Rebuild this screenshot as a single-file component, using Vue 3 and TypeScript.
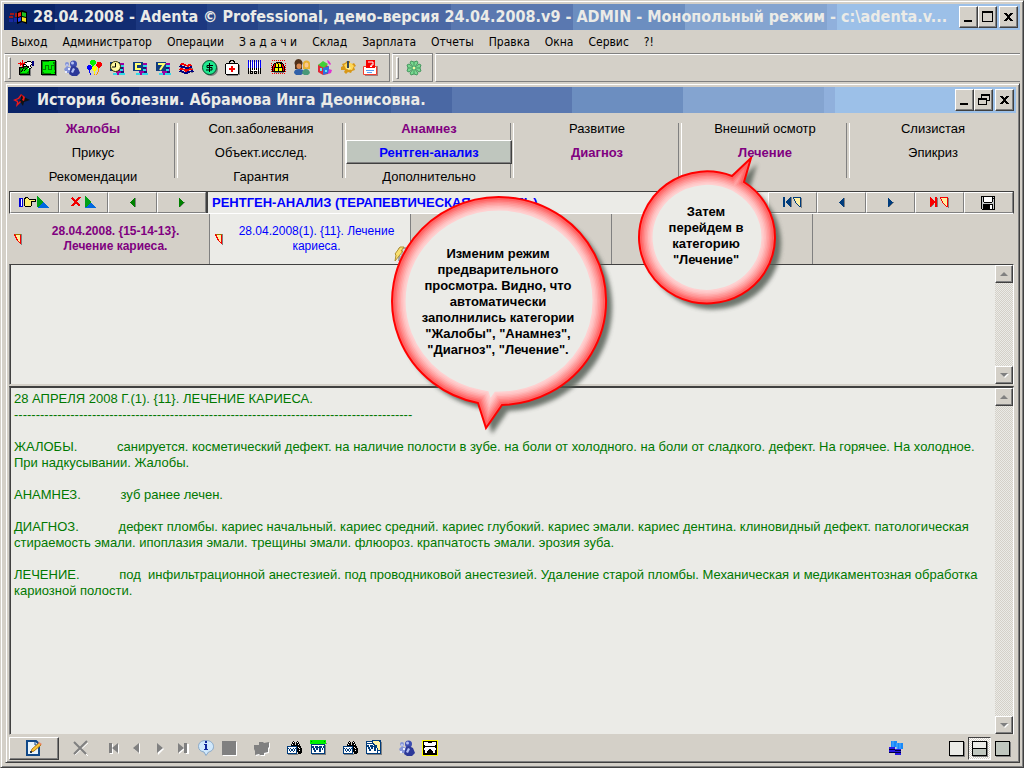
<script setup lang="ts">
import { ref } from 'vue'

interface Shape { d: string; fill: string; stroke?: string; w?: number }

const palette: Record<string, string> = {
  K: '#000000', W: '#ffffff', R: '#f80000', G: '#008000', g: '#00f000', B: '#0000ff', b: '#000080',
  Y: '#ffff00', y: '#fff0a0', C: '#30c8f8', P: '#800080', M: '#d000d0', N: '#003c7c', s: '#808080',
  S: '#c4c8c8', O: '#ff9000', T: '#0060e0', D: '#a07000', m: '#00c040',
}

function pixels(rows: string): Shape[] {
  const byColour: Record<string, string> = {}
  rows.trim().split('\n').forEach((line, y) => {
    const row = line.trim()
    let x = 0
    while (x < row.length) {
      const c = row[x]
      let end = x
      while (row[end] === c) end++
      if (palette[c]) byColour[c] = (byColour[c] ?? '') + `M${x} ${y}h${end - x}v1h${x - end}z`
      x = end
    }
  })
  return Object.entries(byColour).map(([c, d]) => ({ d, fill: palette[c] }))
}

const people: Shape[] = [
  { d: 'M1 4a2 2 0 1 1 4 0a2 2 0 1 1-4 0M0 9l3-3 4 2v5H2z', fill: '#8494d8' },
  { d: 'M6 4a3.500 3.500 0 1 1 7 0a3.500 3.500 0 1 1-7 0', fill: '#3c4cb0' },
  { d: 'M5 14l2-7 3-1 4 2 2 5-3 3H8z', fill: '#2c3898' },
  { d: 'M7 3a1.500 1.500 0 1 1 3 0a1.500 1.500 0 1 1-3 0M7 12l2-4 2 1-2 4zM2 4h2v2H2z', fill: '#b4c0f4' },
  { d: 'M4 8h2v2H4zM1 11h2v2H1z', fill: '#e8ecff' },
]

const stripes = (glyph: string): Shape[] => [
  { d: 'M6 3h8v12H6z', fill: '#a000a0' },
  { d: 'M10 5h4v2h-4zM10 9h3v2h-3zM3 13h4v2H3zM9 13h6v2H9z', fill: '#30d8e8' },
  { d: 'M10 7h3v2h-3zM11 11h3v2h-3z', fill: '#181878' },
  { d: 'M0 2h10v9H0z', fill: '#103c80' },
  { d: glyph, fill: 'none', stroke: '#ffff70', w: 2 },
]

const binocularWord = `
................
......K...K.....
.....KWK.KWK....
.....KKK.KKK....
....KWKK.KKWK...
....KKKKKKKKK...
NNNNNNNNNNKKKK..
NWWWWWWWWNKWKK..
NNWNWWNWNNKKWKK.
NWNWNNWNWNKKKKK.
NWNWNNWNWNKKWKK.
NWWNWWNWWNKKKKK.
NWWWWWWWWN.KKKK.
NNNNNNNNNN.KKK..
.ssssssssss.....
................`

const icons: Record<string, Shape[]> = {
  exit: pixels(`
....R...........
....R....KKKK.bb
..R.R.RKKWWWWKbb
RRRRRRRWWWWWWWbb
..RRRKKKWWWWWKbb
..R.RKWWKWWWK.bb
....RKKKKKKWK...
.KKKKKGGgKKWWK..
.KGGgKGGKgWKK...
.KGgKggKgggKs...
.KGGKgKggggKs...
.KGKggggggGKs...
.KGggggggGGKs...
.KGGGGGGGGGKs...
.KKKKKKKKKKKs...
..sssssssssss...`),
  monitor: pixels(`
KKKKKKKKKKKKKKK.
KGGGGGGGggggggKs
KGggggggggggGGKs
KGggggggggggGGKs
KGgggggggggggGKs
KGggGGGGggGGGGKs
KGggGggGggGggGKs
KGggGggGggGggGKs
KGggGggGggGggGKs
KGGGGggGGGGggGKs
KGggggggggggggKs
KGggggggggggggKs
KGGggggggggggGKs
KGGGGGGGGGggggKs
KKKKKKKKKKKKKKKs
.sssssssssssssss`),
  people,
  balloons: pixels(`
....gggg........
...gggggg.......
...gggggg.RRRR..
...gggggg.RRRRR.
....gggg.RRRRRR.
.BBB.gg..RRRRRR.
BBBBBgYYY.RRRR..
BBBBBYYYYY.RR...
BBBBBYYYYY.O....
.BBB.YYYYY.O....
..B...YYY..O....
..B....Y...O....
..B....Y..O.....
...B...Y..O.....
...B...O.O......
................`),
  clock: [
    ...stripes('M1 3'),
    { d: 'M.5 6.500a5 5 0 1 1 10 0a5 5 0 1 1-10 0', fill: '#fff8a0', stroke: '#303000', w: 1 },
    { d: 'M5.500 3v4H2', fill: 'none', stroke: '#000', w: 1 },
  ],
  copyC: stripes('M8 4H3v5h5'),
  week: stripes('M2 4h6L4 10'),
  flags: pixels(`
................
................
................
..RRR...........
.RRRRRR..RRR....
.bb..RRRRRRRR...
bbbbbb..RR.bb...
.sbbbbbbbbbbb...
.RRR..bbbbRRss..
RRRRRRRRRRRRRR..
.bb..RRRRR..bb..
bbbbb.RRbbbbbbb.
..sbbbbbbbb.ss..
.....bbbb.......
................
................`),
  dollar: [
    { d: 'M2 9a7 7 0 1 1 14 0a7 7 0 1 1-14 0', fill: '#808080' },
    { d: 'M.5 7.500a7 7 0 1 1 14 0a7 7 0 1 1-14 0', fill: '#20e890', stroke: '#004c28', w: 1 },
    { d: 'M11 5.500H5v2h5v2.500H4M7.500 3v9', fill: 'none', stroke: '#000', w: 1 },
  ],
  medkit: pixels(`
.....KKKK.......
....KK..KK......
....K....K......
.KKKKKKKKKKKK...
KWWWWWWWWWWWWK..
KWWWWWWWWWWWWKs.
KWWWWWRRWWWWWKs.
KWWWWWRRWWWWWKs.
KWWWRRRRRRWWWKs.
KWWWRRRRRRWWWKs.
KWWWWWRRWWWWWKs.
KWWWWWRRWWWWWKs.
KWWWWWWWWWWWWKs.
KWWWWWWWWWWWWKs.
.KKKKKKKKKKKKss.
..sssssssssss...`),
  barcode: pixels(`
B.b.B.b.B.b.B...
B.b.B.b.B.b.B...
BWbWBWbWBWbWB...
BWbWBWbWBWbWB...
BWbWBWbWBWbWB...
BWbWBWbWBWbWB...
BWbWBWbWBWbWB...
BWbWBWbWBWbWB...
KWKWKWKWKWKWK...
KWKWKWKWKWKWK...
KWKWWWWWWWKWK...
K.KKK.KKK.K.K...
K.K.K.K.K.K.K...
K.KKK.KKK.K.K...
................
................`),
  siren: pixels(`
.R.R.R.R.R.R.R..
................
.....KKKKKK.....
R..KKOKOOKKK..R.
..KRKYYKYYKRK...
R.KRKYYKYYKRK.R.
.KRRKYYKYYKRRK..
RKRKKKKKKKKKRKR.
.KRKYYYKYYYKRK..
RKRKYYYKYYYKRKR.
.KRKYYYKYYYKRK..
RKKKKKKKKKKKKKR.
...ssssssssss...
.R.R.R.R.R.R.R..
................
................`),
  couple: [
    { d: 'M1 5a4 4 0 1 1 7 0v4H1z', fill: '#503018' },
    { d: 'M2.500 6a2.500 2.500 0 1 1 5 0a2.500 3 0 1 1-5 0', fill: '#d88850' },
    { d: 'M0 13q0-4 5-4t5 4l-3 2H2z', fill: '#3060a8' },
    { d: 'M9 4a3.500 3.500 0 1 1 7 0v5H9z', fill: '#e8b030' },
    { d: 'M10.500 5a2 2.500 0 1 1 4 0a2 2.500 0 1 1-4 0', fill: '#f8c890' },
    { d: 'M8 13q1-4 4-4t4 4l-2 2h-4z', fill: '#489878' },
  ],
  cubes: [
    { d: 'M1 5l5-2 5 3v8l-5 1-5-3z', fill: '#e02838' },
    { d: 'M1 5l5-4 5 3-4 4z', fill: '#40d038' },
    { d: 'M6 8l6-2v7l-6 2z', fill: '#3070e0' },
    { d: 'M10 0l2 1 2 3-1 1-2-2zM12 9l3 1-1 3-3 1z', fill: '#e030d0' },
    { d: 'M3 8h2v3H3zM8 10h2v2H8z', fill: '#60e8f0' },
  ],
  gear: [
    { d: 'M7 1h3v2l2 1 2-1 2 3-2 1 1 3-3 1-1 2-3-1-2 2-2-2 1-2H1V7l2-1-1-2 3-1z', fill: '#d89818' },
    { d: 'M4 5l3-2h4l3 3-2 4-6-1z', fill: '#ffd858' },
    { d: 'M6 8l2-2 3 2-2 2z', fill: '#fff0a0' },
    { d: 'M7 1h2v7H7z', fill: '#384858' },
  ],
  helpDoc: [
    { d: 'M2 6h13v10H2z', fill: '#a08080' },
    { d: 'M.5 6.500h13v8H.5z', fill: '#fff', stroke: '#f04030', w: 1 },
    { d: 'M3 0h9v8H3z', fill: '#f80000' },
    { d: 'M5 2h5v3H8v1M7 2', fill: 'none', stroke: '#fff', w: 1 },
    { d: 'M7 6h2v1H7z', fill: '#fff' },
    { d: 'M3 10h8v1H3zM4 12h5v1H4z', fill: '#60a0f0' },
  ],
  clover: [
    { d: 'M8 8L4 3l1-2 3 1 3-1 1 2zM8 8l5-4 2 1-1 3 1 3-2 1zM8 8l4 5-1 2-3-1-3 1-1-2zM8 8l-5 4-2-1 1-3-1-3 2-1z', fill: '#78d890', stroke: '#489860', w: 1 },
    { d: 'M8 2v4M8 10v4M2 8h4M10 8h4', fill: 'none', stroke: '#489860', w: 1 },
    { d: 'M7 7h2v2H7z', fill: '#f8f8a0' },
  ],
  windows: [
    { d: 'M1 4h4v2H1zM0 7h4v2H0zM6 4h2v4H6z', fill: '#a01818' },
    { d: 'M0 10h4v3H0zM5 9h3v4H5z', fill: '#1828a0' },
    { d: 'M8 3l5-2 5 2v12l-5-2-5 2z', fill: '#000' },
    { d: 'M9 4l3-1v4L9 8z', fill: '#f02818' },
    { d: 'M13 3l4 1v4l-4-1z', fill: '#20c020' },
    { d: 'M9 9l3-1v4l-3 1z', fill: '#2040f0' },
    { d: 'M13 8l4 1v4l-4-1z', fill: '#f0e020' },
  ],
  star: [
    { d: 'M8 2l3 3 6 3-6 2-1 4-2-3-2-1 2-3z', fill: '#101010' },
    { d: 'M8 2L5 6 0 8l4 2-1 5 5-5-1-1-2 2v-2L3 8l3-1 3-4 1 3-1 2 2 1 1-4z', fill: '#f01818' },
  ],
  hand: [
    { d: 'M0 2h4v9H0z', fill: '#0000d8' },
    { d: 'M2 3h1v7H2z', fill: '#fff' },
    { d: 'M5 3l3-2 2 2h6v2h-4v1h1l-1 4H6l-1-2z', fill: '#fff070', stroke: '#000', w: 1 },
    { d: 'M19 1v11h11z', fill: '#0068e0' },
    { d: 'M18 11V0l6 6-5 5z', fill: '#00a018' },
  ],
  cross: [
    { d: 'M3 2l8 8M11 1l-8 9', fill: 'none', stroke: '#f00000', w: 2 },
    { d: 'M16 1v11h12z', fill: '#0068e0' },
    { d: 'M16 11V0l6 6-5 5z', fill: '#00a018' },
  ],
  prevGreen: pixels(`
....Gs
...GGs
..GGGs
.GGGGs
GGGGGs
.GGGGs
..GGGs
...GGs
....Gs`),
  nextGreen: pixels(`
G.....
GG....
GGG...
GGGG..
GGGGGs
GGGGs.
GGGs..
GGs...
Gs....`),
  prevBlue: pixels(`
....Ns
...NNs
..NNNs
.NNNNs
NNNNNs
.NNNNs
..NNNs
...NNs
....Ns`),
  nextBlue: pixels(`
N.....
NN....
NNN...
NNNN..
NNNNNs
NNNNs.
NNNs..
NNs...
Ns....`),
  firstPage: pixels(`
NN.....Ns.NNNNNNNN.
NN....NNs.NyyyyyyNs
NN...NNNs..NyyyyyNs
NN..NNNNs..NyyyyyNs
NN.NNNNNs...NyyyyNs
NN.NNNNNs...NyyyyNs
NN..NNNNs....NyyyNs
NN...NNNs.....NyyNs
NN....NNs......NyNs
NN.....Ns.......NNs
..................s`),
  lastPage: pixels(`
R....RR...RRRRRRRR.
RR...RRs..RyyyyyyRs
RRR..RRs...RyyyyyRs
RRRR.RRs...RyyyyyRs
RRRRRRRs....RyyyyRs
RRRRRRRs....RyyyyRs
RRRR.RRs.....RyyyRs
RRRs.RRs......RyyRs
RRs..RRs.......RyRs
Rs...RRs........RRs
..................s`),
  floppy: pixels(`
KKKKKKKKKKKKKK..
KSKWWWWWWWWKSK..
KSKWWWWWWWWKKK..
KSKWWWWWWWWKSK..
KSKWWWWWWWWKSK..
KSKWWWWWWWWKSK..
KSSKKKKKKKKSSK..
KSSSSSSSSSSSSK..
KSKKKKKKKKKKSK..
KSKKKKKKKWWKSK..
KSKKKKKKKWWKSK..
KSKKKKKKKWWKSK..
KSKKKKKKKWWKSK..
.KKKKKKKKKKKKK..`),
  mark: pixels(`
RDDDDDDs
RRyyyyRs
.RyyyyRs
.RRyyyRs
..RyyyRs
..RRyyRs
...RyyRs
....RyRs
.....RRs
......Rs
.......s`),
  sheet: [
    { d: 'M6 2h7l2 2v11H6z', fill: '#d8d8dc', stroke: '#686870', w: 1 },
    { d: 'M2 8L7 1h4L8 5h2L2 15l1-6z', fill: '#f8e070', stroke: '#b09030', w: 1 },
    { d: 'M9 7h5M8 9h6M7 11h7M7 13h7', fill: 'none', stroke: '#8888a8', w: 1 },
  ],
  note: [
    { d: 'M1 1h9l3 3v11H1z', fill: '#e8f4fc', stroke: '#104888', w: 2 },
    { d: 'M9 1v4h4', fill: 'none', stroke: '#104888', w: 1 },
    { d: 'M5 12l1-3 7-6 2 2-7 6z', fill: '#f8c838', stroke: '#b87818', w: 1 },
    { d: 'M13 2l3 2-1 1-3-2z', fill: '#f08868' },
    { d: 'M4 11h2v2H4z', fill: '#283848' },
  ],
  remove: [
    { d: 'M2 3l13 13M15 3L2 15', fill: 'none', stroke: '#fff', w: 1 },
    { d: 'M1 2l12 12M14 1L1 14', fill: 'none', stroke: '#808080', w: 2 },
  ],
  first: [
    { d: 'M4 4h3v10H4zM13 4v10L8 9z', fill: '#fff' },
    { d: 'M3 3h3v10H3zM12 3v10L6 8z', fill: '#808080' },
  ],
  prev: [{ d: 'M11 3v11L5 9z', fill: '#fff' }, { d: 'M10 3v10L4 8z', fill: '#808080' }],
  next: [{ d: 'M6 4v11l6-6z', fill: '#fff' }, { d: 'M5 3v10l6-5z', fill: '#808080' }],
  last: [
    { d: 'M4 4v10l6-5zM11 4h3v10h-3z', fill: '#fff' },
    { d: 'M3 3v10l6-5zM9 3h3v10H9z', fill: '#808080' },
  ],
  info: [
    { d: 'M8 .5c5 0 7.500 3 7.500 6 0 4-3 5-5 5.500L8 15.500 6 12C3 11.500.5 10 .5 6.500.5 3 3 .5 8 .5z', fill: '#d0e8fc', stroke: '#88a8c8', w: 1 },
    { d: 'M7 1h2v2H7zM6 4h3v5h1v1H6V9h1V5H6z', fill: '#10289c' },
  ],
  stop: [{ d: 'M2 2h14v14H2z', fill: '#fff' }, { d: 'M1 1h14v14H1z', fill: '#808080' }],
  puzzle: [
    { d: 'M6 3h4l1 1 5-1v5l-1 1v4l-4 1v2H7l-1-1-4 1v-4l-1-1V6h5z', fill: '#fff' },
    { d: 'M5 2h4l1 1 5-1v5l-1 1v4l-4 1v2H6l-1-1-4 1v-4L0 9V5h5z', fill: '#808080' },
  ],
  findWord: pixels(binocularWord),
  wordGreen: pixels(`
gggggggggggggggg
gGggggggggggggGg
gggggggggggggggg
ggggggggggggggggs
.NNNNNNNNNNNNNN.
.NWWWWWWWWWWWWNs
.NNNWNNNWNNNWNNs
.NNNWNNNNNNNWNNs
.NWNNWNNWNNWNWNs
.NWNNWNNWNNWNWNs
.NWWNNWWWNNWWWNs
.NWWNNWWWNNWWWNs
.NWWWWWWWWWWWWNs
.NNNNNNNNNNNNNNs
..ssssssssssssss
................`),
  wordYellow: pixels(`
......NNNNNNNNN.
NNNNNNNyyyyyyNN.
NWWWWWNyyyyyyyNs
NNNNNNNNyyyyyyNs
NWWWWWWNNyyyyyNs
NNNWNNNWNNNyyyNs
NNNWNNNNNNNyyyNs
NWNNWNNWNNNyyyNs
NWNNWNNWNNWNyyNs
NWWNNWWWNNWNyyNs
NWWNNWWWNNWNNNNs
NWWWWWWWWWWNWWNs
NWWWWWWWWWWNWWNs
NNNNNNNNNNNNNNNs
.sssssssssssssss
................`),
  tooth: pixels(`
YYYYYYYYYYYYYYYY
YKKKKKKKKKKKKKKY
YKWWWWKKKKWWWWKY
YKWWWWWWWWWWWWKY
YKWWWWWWWWWWWWKY
YKKWWWWWWWWWWKKY
YKKKKKKKKKKKKKKY
YKKWWWWWWWWWWKKY
YKWWWWWWWWWWWWKY
YKWWWWWKKWWWWWKY
YKKWWWKKKKWWWKKY
YKKWWKKKKKKWWKKY
YKKWWKKKKKKWWKKY
YKKKKKKKKKKKKKKY
YKKKKKKKKKKKKKKY
YYYYYYYYYYYYYYYY`),
  blocks: [
    { d: 'M3 1h6v2h6v6H9V7H3z', fill: '#1888f8' },
    { d: 'M5 1v6M9 3v6M12 3v6', fill: 'none', stroke: '#50b0ff', w: 1 },
    { d: 'M1 7h6v2h6v6H7v-2H1z', fill: '#2818e0' },
    { d: 'M1 9.500h6M1 12.500h12M7 10.500h6', fill: 'none', stroke: '#000040', w: 1 },
  ],
  minimize: [{ d: 'M2 10h8v2H2z', fill: '#000' }],
  maximize: [{ d: 'M1.500 2.500h10v9h-10z', fill: 'none', stroke: '#000', w: 1 }, { d: 'M1 1h11v2H1z', fill: '#000' }],
  restore: [
    { d: 'M4.500 2.500h8v5h-8z', fill: '#d4d0c8', stroke: '#000', w: 1 },
    { d: 'M1.500 6.500h8v5h-8z', fill: '#d4d0c8', stroke: '#000', w: 1 },
    { d: 'M4 1h9v2H4zM1 5h9v2H1z', fill: '#000' },
  ],
  close: [{ d: 'M3 3l7 8M10 3l-7 8', fill: 'none', stroke: '#000', w: 2 }],
  up: [{ d: 'M3 9l4-4 4 4z', fill: '#808080' }],
  down: [{ d: 'M4 6h8l-4 4z', fill: '#fff' }, { d: 'M3 5h8l-4 4z', fill: '#808080' }],
}

const title = '28.04.2008 - Adenta © Professional, демо-версия 24.04.2008.v9 - ADMIN - Монопольный режим - c:\\adenta.v...'
const menu = ['Выход', 'Администратор', 'Операции', 'З а д а ч и', 'Склад', 'Зарплата', 'Отчеты', 'Правка', 'Окна', 'Сервис', '?!']
const tools: [string, string][] = [
  ['exit', 'Выход'], ['monitor', 'Монитор'], ['people', 'Пациенты'], ['balloons', 'Дни рождения'], ['clock', 'Время'],
  ['copyC', 'Календарь'], ['week', 'Неделя'], ['flags', 'Флаги'], ['dollar', 'Касса'], ['medkit', 'Лечение'],
  ['barcode', 'Штрихкод'], ['siren', 'Вызов'], ['couple', 'Персонал'], ['cubes', 'Склад'], ['gear', 'Настройка'], ['helpDoc', 'Справка'],
]
const columns: { text: string; filled?: boolean }[][] = [
  [{ text: 'Жалобы', filled: true }, { text: 'Прикус' }, { text: 'Рекомендации' }],
  [{ text: 'Соп.заболевания' }, { text: 'Объект.исслед.' }, { text: 'Гарантия' }],
  [{ text: 'Анамнез', filled: true }, { text: 'Рентген-анализ' }, { text: 'Дополнительно' }],
  [{ text: 'Развитие' }, { text: 'Диагноз', filled: true }],
  [{ text: 'Внешний осмотр' }, { text: 'Лечение', filled: true }],
  [{ text: 'Слизистая' }, { text: 'Эпикриз' }],
]
const active = ref('Рентген-анализ')
const leftNav: [string, string, number, number][] = [
  ['hand', 'Выбрать', 31, 13], ['cross', 'Удалить', 29, 13], ['prevGreen', 'Назад', 6, 9], ['nextGreen', 'Вперед', 6, 9],
]
const rightNav: [string, string, number, number][] = [
  ['firstPage', 'Первая запись', 19, 11], ['prevBlue', 'Предыдущая запись', 6, 9], ['nextBlue', 'Следующая запись', 6, 9],
  ['lastPage', 'Последняя запись', 19, 11], ['floppy', 'Сохранить', 16, 14],
]
const heading = ref('РЕНТГЕН-АНАЛИЗ (ТЕРАПЕВТИЧЕСКАЯ  ПАНЕЛЬ)')
const note = ref('')
const gap = ' '.repeat(11)
const preview = ref([
  '28 АПРЕЛЯ 2008 Г.(1). {11}. ЛЕЧЕНИЕ КАРИЕСА.',
  '-'.repeat(92),
  '',
  `ЖАЛОБЫ.${gap}санируется. косметический дефект. на наличие полости в зубе. на боли от холодного. на боли от сладкого. дефект. На горячее. На холодное. При надкусывании. Жалобы.`,
  '',
  `АНАМНЕЗ.${gap}зуб ранее лечен.`,
  '',
  `ДИАГНОЗ.${gap}дефект пломбы. кариес начальный. кариес средний. кариес глубокий. кариес эмали. кариес дентина. клиновидный дефект. патологическая стираемость эмали. ипоплазия эмали. трещины эмали. флюороз. крапчатость эмали. эрозия зуба.`,
  '',
  `ЛЕЧЕНИЕ.${gap}под  инфильтрационной анестезией. под проводниковой анестезией. Удаление старой пломбы. Механическая и медикаментозная обработка кариозной полости.`,
].join('\n'))

const footGroups: [string, string][][] = [
  [['remove', 'Удалить']],
  [['first', 'В начало'], ['prev', 'Назад'], ['next', 'Вперед'], ['last', 'В конец'], ['info', 'Сведения'], ['stop', 'Стоп']],
  [['puzzle', 'Модуль']],
  [['findWord', 'Найти шаблон'], ['wordGreen', 'Шаблон']],
  [['findWord', 'Найти документ'], ['wordYellow', 'Документ']],
  [['people', 'Пациенты'], ['tooth', 'Зубная формула']],
]
const views = ['top', 'split', 'bottom']
const viewNames: Record<string, string> = { top: 'Только запись', split: 'Запись и просмотр', bottom: 'Только просмотр' }
const view = ref('split')

const callouts = [
  {
    id: 'preview', w: 240, h: 250, d: 'M98 213A107 104 0 1 1 122 215L106 238Z',
    lines: ['Изменим режим', 'предварительного', 'просмотра. Видно, что', 'автоматически', 'заполнились категории', '"Жалобы", "Анамнез",', '"Диагноз", "Лечение".'],
  },
  {
    id: 'category', w: 170, h: 170, d: 'M118 31A68 66 0 1 1 106 25L125 7Z',
    lines: ['Затем', 'перейдем в', 'категорию', '"Лечение"'],
  },
]
const rings: [number, string][] = [
  [27, '#ffd0d0'], [24, '#ffc8c8'], [21, '#ffbcbc'], [18, '#ffacac'], [15, '#ff9c9c'],
  [12, '#ff8c8c'], [9, '#ff7878'], [6, '#ff6464'],
]
</script>

<template>
  <div class="window">
    <header class="titlebar">
      <svg class="app-icon" viewBox="0 0 19 16" aria-hidden="true"><path v-for="(s, i) in icons.windows" :key="i" :d="s.d" :fill="s.fill" /></svg>
      <h1>{{ title }}</h1>
      <div class="winbuttons">
        <button v-for="b in ['minimize', 'maximize', 'close']" :key="b" :class="['win', b]" :aria-label="b">
          <svg viewBox="0 0 14 14"><path v-for="(s, i) in icons[b]" :key="i" :d="s.d" :fill="s.fill" :stroke="s.stroke" :stroke-width="s.w" /></svg>
        </button>
      </div>
    </header>

    <nav class="menu"><button v-for="m in menu" :key="m">{{ m }}</button></nav>

    <div class="toolbar">
      <div class="band">
        <i class="grip"></i>
        <button v-for="[n, label] in tools" :key="n" class="tool" :aria-label="label">
          <svg viewBox="0 0 16 16"><path v-for="(s, i) in icons[n]" :key="i" :d="s.d" :fill="s.fill" :stroke="s.stroke" :stroke-width="s.w" /></svg>
        </button>
      </div>
      <div class="band short">
        <i class="grip"></i>
        <button class="tool" aria-label="Клевер">
          <svg viewBox="0 0 16 16"><path v-for="(s, i) in icons.clover" :key="i" :d="s.d" :fill="s.fill" :stroke="s.stroke" :stroke-width="s.w" /></svg>
        </button>
      </div>
      <div class="band rest"></div>
    </div>

    <main class="child">
      <header class="titlebar">
        <svg class="app-icon" viewBox="0 0 19 16" aria-hidden="true"><path v-for="(s, i) in icons.star" :key="i" :d="s.d" :fill="s.fill" /></svg>
        <h2>История болезни. Абрамова Инга Деонисовна.</h2>
        <div class="winbuttons">
          <button v-for="b in ['minimize', 'restore', 'close']" :key="b" :class="['win', b]" :aria-label="b">
            <svg viewBox="0 0 14 14"><path v-for="(s, i) in icons[b]" :key="i" :d="s.d" :fill="s.fill" :stroke="s.stroke" :stroke-width="s.w" /></svg>
          </button>
        </div>
      </header>

      <nav class="categories">
        <div v-for="(col, c) in columns" :key="c" class="column">
          <button v-for="item in col" :key="item.text" :class="{ filled: item.filled, active: item.text === active }" @click="active = item.text">{{ item.text }}</button>
        </div>
      </nav>

      <div class="body">
        <div class="navrow">
          <div class="navgroup">
            <button v-for="[n, label, w, h] in leftNav" :key="n" :aria-label="label">
              <svg :width="w" :height="h" :viewBox="`0 0 ${w} ${h}`"><path v-for="(s, i) in icons[n]" :key="i" :d="s.d" :fill="s.fill" :stroke="s.stroke" :stroke-width="s.w" /></svg>
            </button>
          </div>
          <input v-model="heading" class="heading" aria-label="Категория">
          <div class="navgroup">
            <button v-for="[n, label, w, h] in rightNav" :key="n" :aria-label="label">
              <svg :width="w" :height="h" :viewBox="`0 0 ${w} ${h}`"><path v-for="(s, i) in icons[n]" :key="i" :d="s.d" :fill="s.fill" :stroke="s.stroke" :stroke-width="s.w" /></svg>
            </button>
          </div>
        </div>

        <div class="visits">
          <button class="visit past">
            <svg class="mark" viewBox="0 0 8 11"><path v-for="(s, i) in icons.mark" :key="i" :d="s.d" :fill="s.fill" /></svg>
            <span>28.04.2008. {15-14-13}.<br>Лечение кариеса.</span>
          </button>
          <button class="visit current">
            <svg class="mark" viewBox="0 0 8 11"><path v-for="(s, i) in icons.mark" :key="i" :d="s.d" :fill="s.fill" /></svg>
            <span>28.04.2008(1). {11}. Лечение<br>кариеса.</span>
            <svg class="sheet" viewBox="0 0 16 16"><path v-for="(s, i) in icons.sheet" :key="i" :d="s.d" :fill="s.fill" :stroke="s.stroke" :stroke-width="s.w" /></svg>
          </button>
          <div class="visit"></div>
          <div class="visit"></div>
          <div class="visit"></div>
        </div>

        <div class="memo upper">
          <textarea v-model="note" aria-label="Запись"></textarea>
          <div class="scroll">
            <button aria-label="Вверх"><svg viewBox="0 0 14 14"><path v-for="(s, i) in icons.up" :key="i" :d="s.d" :fill="s.fill" /></svg></button>
            <button aria-label="Вниз"><svg viewBox="0 0 14 14"><path v-for="(s, i) in icons.down" :key="i" :d="s.d" :fill="s.fill" /></svg></button>
          </div>
        </div>
        <div class="memo lower">
          <textarea v-model="preview" aria-label="Просмотр" readonly></textarea>
          <div class="scroll">
            <button aria-label="Вверх"><svg viewBox="0 0 14 14"><path v-for="(s, i) in icons.up" :key="i" :d="s.d" :fill="s.fill" /></svg></button>
            <button aria-label="Вниз"><svg viewBox="0 0 14 14"><path v-for="(s, i) in icons.down" :key="i" :d="s.d" :fill="s.fill" /></svg></button>
          </div>
        </div>

        <footer class="foot">
          <button class="edit" aria-label="Изменить">
            <svg viewBox="0 0 17 17"><path v-for="(s, i) in icons.note" :key="i" :d="s.d" :fill="s.fill" :stroke="s.stroke" :stroke-width="s.w" /></svg>
          </button>
          <div v-for="(g, k) in footGroups" :key="k" class="footgroup">
            <button v-for="[n, label] in g" :key="label" class="tool" :aria-label="label">
              <svg viewBox="0 0 16 16"><path v-for="(s, i) in icons[n]" :key="i" :d="s.d" :fill="s.fill" :stroke="s.stroke" :stroke-width="s.w" /></svg>
            </button>
          </div>
          <div class="footright">
            <button class="tool blocks" aria-label="Окна">
              <svg viewBox="0 0 16 16"><path v-for="(s, i) in icons.blocks" :key="i" :d="s.d" :fill="s.fill" :stroke="s.stroke" :stroke-width="s.w" /></svg>
            </button>
            <button v-for="v in views" :key="v" :class="['view', v, { on: v === view }]" :aria-label="viewNames[v]" @click="view = v"><i></i></button>
          </div>
        </footer>
      </div>
    </main>

    <aside v-for="c in callouts" :key="c.id" :class="['callout', c.id]">
      <svg :width="c.w" :height="c.h" :viewBox="`0 0 ${c.w} ${c.h}`" aria-hidden="true">
        <defs>
          <clipPath :id="`clip-${c.id}`"><path :d="c.d" /></clipPath>
          <filter :id="`blur-${c.id}`" x="-20%" y="-20%" width="140%" height="140%"><feGaussianBlur stdDeviation="2" /></filter>
        </defs>
        <path :d="c.d" fill="#505850" opacity="0.8" transform="translate(6 6)" :filter="`url(#blur-${c.id})`" />
        <path :d="c.d" fill="#ebebe7" />
        <g :clip-path="`url(#clip-${c.id})`">
          <path v-for="[w, colour] in rings" :key="w" :d="c.d" fill="none" :stroke="colour" :stroke-width="w" />
        </g>
        <path :d="c.d" fill="none" stroke="#ff0000" stroke-width="2" />
      </svg>
      <p><span v-for="l in c.lines" :key="l">{{ l }}</span></p>
    </aside>
  </div>
</template>

<style>
body { margin: 0; background: #d4d0c8; }
</style>

<style scoped>
* { box-sizing: border-box; }
button, input, textarea { font: inherit; color: inherit; border: 0; border-radius: 0; padding: 0; margin: 0; background: none; outline: 0; }
button { flex: none; }
svg { display: block; flex: none; }
h1, h2, p { margin: 0; }

.window {
  position: relative;
  display: flex;
  flex-direction: column;
  min-height: 100vh;
  padding: 2px 3px 4px 3px;
  background: #d4d0c8;
  border: 1px solid;
  border-color: #d4d0c8 #404040 #404040 #d4d0c8;
  box-shadow: inset 1px 1px #fff, inset -1px -1px #808080;
  font: 13px/16px "Liberation Sans", Arial, sans-serif;
  color: #000;
}
.titlebar {
  display: flex;
  align-items: center;
  height: 26px;
  margin-top: 1px;
  padding: 0 2px 0 5px;
  background: linear-gradient(90deg, #0a2468 0 5%, #122c72 5% 13%, #1c3880 13% 20%, #264488 20% 25%, #2f5090 25% 31%, #3c5c98 31% 38%, #4a68a4 38% 44%, #5a78b0 44% 56%, #6c8ec0 56% 67%, #84a4d0 67% 81%, #90b0dc 81% 82%, #9cc0e8 82%);
  color: #ebebe7;
}
.titlebar h1, .titlebar h2 {
  flex: 1;
  min-width: 0;
  padding-left: 5px;
  overflow: hidden;
  white-space: nowrap;
  font: bold 16px/24px "DejaVu Sans Condensed", "Noto Sans", sans-serif;
}
.app-icon { width: 19px; height: 16px; }
.winbuttons { display: flex; }
.win {
  display: grid;
  place-items: center;
  width: 19px;
  height: 22px;
  background: #d4d0c8;
  border: 1px solid;
  border-color: #fff #404040 #404040 #fff;
  box-shadow: inset -1px -1px #808080;
}
.win.close { margin-left: 2px; }
.win svg { width: 14px; height: 14px; shape-rendering: crispEdges; }

.menu {
  display: flex;
  align-items: center;
  gap: 15px;
  height: 23px;
  padding: 0 7px;
  font: 12px/16px "DejaVu Sans Condensed", "Noto Sans", sans-serif;
  white-space: pre;
}

.toolbar { display: flex; gap: 2px; height: 29px; }
.band {
  display: flex;
  align-items: center;
  padding: 0 7px 0 3px;
  border: 1px solid #808080;
  border-left-color: #fff;
  box-shadow: inset 0 1px #fff;
}
.band.rest { flex: 1; border-right: 0; }
.grip { width: 3px; height: 22px; margin-right: 3px; border: 1px solid; border-color: #fff #808080 #808080 #fff; }
.tool { display: grid; align-items: center; justify-content: start; width: 23px; height: 22px; padding-left: 4px; }
.tool svg { width: 16px; height: 16px; overflow: visible; }

.child {
  flex: 1;
  display: flex;
  flex-direction: column;
  margin: 1px 0 0 1px;
  padding: 3px 3px 1px 2px;
  border: 1px solid;
  border-color: #d4d0c8 #404040 #404040 #d4d0c8;
  box-shadow: inset 1px 1px #fff, inset -1px -1px #808080;
}
.child .titlebar { margin-top: 0; }

.categories { display: grid; grid-template-columns: repeat(6, 1fr); padding: 3px 0; }
.column { position: relative; display: flex; flex-direction: column; height: 72px; }
.column:not(:last-child)::after {
  content: "";
  position: absolute;
  right: -2px;
  top: 7px;
  bottom: 10px;
  width: 2px;
  border: solid;
  border-width: 0 1px;
  border-color: #808080 #fff;
  border-left-color: #808080;
  border-right-color: #fff;
}
.column button { position: relative; z-index: 1; height: 24px; margin: 0 0 0 2px; padding-top: 2px; text-align: center; }
.column .filled { color: #800080; font-weight: bold; }
.column .active {
  color: #0000ff;
  font-weight: bold;
  background: #bfc6be;
  border: 1px solid;
  border-color: #fff #404040 #404040 #fff;
  box-shadow: inset -1px -1px #808080;
}

.body { flex: 1; display: flex; flex-direction: column; padding: 0 2px 0 1px; }
.navrow { display: flex; height: 23px; border: 1px solid; border-color: #404040 #404040 #fff #404040; }
.navgroup { display: flex; }
.navgroup button {
  display: grid;
  place-items: center;
  width: 49px;
  background: #d4d0c8;
  border: 1px solid;
  border-color: #fff #808080 #808080 #fff;
}
.navgroup svg, .mark { shape-rendering: crispEdges; }
.heading { flex: 1; min-width: 0; padding-left: 4px; background: #ebebe7; border-left: 2px solid #404040; color: #0000ff; font-weight: bold; }

.visits { display: grid; grid-template-columns: repeat(5, 1fr); height: 50px; }
.visit { position: relative; display: flex; align-items: center; border-right: 1px solid #808080; text-align: center; font-size: 12px; line-height: 15px; }
.visit:last-child { border-right: 0; }
.visit span { flex: 1; }
.mark { width: 8px; height: 11px; margin-left: 5px; }
.past { color: #800080; font-weight: bold; }
.current { background: #ebebe7; color: #0000ff; }
.sheet { position: absolute; right: 1px; bottom: 2px; width: 16px; height: 16px; }

.memo {
  display: flex;
  background: #ebebe7;
  border: 1px solid;
  border-color: #404040 #fff #d4d0c8 #808080;
  box-shadow: inset 1px 0 #404040;
}
.upper { height: 121px; }
.lower { flex: 1; min-height: 200px; margin-top: 1px; border-top-width: 2px; }
.memo textarea { flex: 1; min-width: 0; padding: 3px 4px; resize: none; overflow: hidden; color: #007800; line-height: 16px; }
.scroll {
  display: flex;
  flex-direction: column;
  justify-content: space-between;
  width: 18px;
  background: repeating-conic-gradient(#d4d0c8 0 25%, #ebebe7 0 50%) 0 0 / 2px 2px;
}
.scroll button {
  display: grid;
  place-items: center;
  height: 18px;
  background: #d4d0c8;
  border: 1px solid;
  border-color: #fff #404040 #404040 #fff;
  box-shadow: inset -1px -1px #808080;
}
.scroll svg { width: 14px; height: 14px; }

.foot { display: flex; align-items: center; height: 26px; }
.edit {
  display: grid;
  place-items: center;
  width: 50px;
  height: 23px;
  border: 1px solid;
  border-color: #fff #404040 #404040 #fff;
  box-shadow: inset -1px -1px #808080;
}
.edit svg { width: 17px; height: 17px; }
.footgroup { display: flex; margin-left: 10px; }
.footright { display: flex; align-items: center; margin-left: auto; }
.blocks { margin-right: 38px; }
.view { display: grid; place-items: center; width: 23px; height: 23px; }
.view i { width: 15px; height: 15px; border: 1px solid #000; box-shadow: 1px 1px #808080; background: #ebebe7; }
.view.bottom i { background: #bfc6be; }
.view.split i { background: linear-gradient(#ebebe7 0 6px, #000 6px 7px, #bfc6be 7px); }
.view.on { border: 1px solid; border-color: #404040 #fff #fff #404040; background: repeating-conic-gradient(#d4d0c8 0 25%, #fff 0 50%) 0 0 / 2px 2px; }

.callout { position: absolute; color: #000; font-weight: bold; text-align: center; }
.callout svg { overflow: visible; }
.callout span { display: block; white-space: nowrap; }
.callout p { position: absolute; left: 0; }
.preview { left: 379px; top: 189px; }
.preview p { top: 56px; width: 236px; }
.category { left: 625px; top: 150px; }
.category p { top: 53px; width: 160px; }
</style>
